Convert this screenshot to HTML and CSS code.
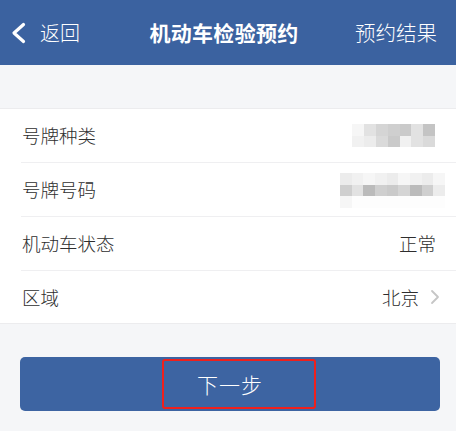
FILE: index.html
```html
<!DOCTYPE html>
<html lang="zh">
<head>
<meta charset="utf-8">
<link rel="stylesheet" href="styles.css">
</head>
<body>
<div class="page">
  <header class="nav">
    <div class="nav-left">
      <svg class="back-icon" width="16" height="22" viewBox="0 0 16 22"><path d="M12.5 2.5 L3 11 L12.5 19.5" fill="none" stroke="#fff" stroke-width="3.2" stroke-linecap="round" stroke-linejoin="round"/></svg>
      <span class="back-text">返回</span>
    </div>
    <div class="nav-title">机动车检验预约</div>
    <div class="nav-right">预约结果</div>
  </header>
  <div class="spacer"></div>
  <section class="list">
    <div class="row">
      <span class="label">号牌种类</span>
      <div class="mosaic m7">
        <i class="s1"></i><i class="s4"></i><i class="s6"></i><i class="s7"></i><i class="s8"></i><i class="s4"></i><i class="s9"></i>
        <i class="s2"></i><i class="s3"></i><i class="s5"></i><i class="s8"></i><i class="s2"></i><i class="s4"></i><i class="s5"></i>
      </div>
    </div>
    <div class="row">
      <span class="label">号牌号码</span>
      <div class="mosaic m9">
        <i class="s3"></i><i class="s2"></i><i class="s1"></i><i class="s2"></i><i class="s3"></i><i class="s1"></i><i class="s2"></i><i class="s3"></i><i class="s1"></i>
        <i class="s7"></i><i class="s4"></i><i class="s10"></i><i class="s7"></i><i class="s8"></i><i class="s6"></i><i class="s10"></i><i class="s7"></i><i class="s3"></i>
        <i class="s1"></i><i class="s0"></i><i class="s0"></i><i class="s0"></i><i class="s0"></i><i class="s0"></i><i class="s0"></i><i class="s0"></i><i class="s0"></i>
      </div>
    </div>
    <div class="row">
      <span class="label">机动车状态</span>
      <span class="value">正常</span>
    </div>
    <div class="row">
      <span class="label">区域</span>
      <span class="value">北京</span>
      <svg class="arrow" width="10" height="16" viewBox="0 0 10 16"><path d="M2 2 L8 8 L2 14" fill="none" stroke="#c6c6c6" stroke-width="1.8" stroke-linecap="round" stroke-linejoin="round"/></svg>
    </div>
  </section>
  <div class="footer">
    <div class="btn">
      <span>下一步</span>
      <div class="highlight"></div>
    </div>
  </div>
</div>
</body>
</html>
```

FILE: styles.css
```css
* { box-sizing: border-box; }
html, body { margin: 0; padding: 0; }
body {
  font-family: "Noto Sans CJK SC", "Noto Sans", sans-serif;
  background: #f5f6f8;
  color: #333;
}
.page { width: 456px; height: 431px; overflow: hidden; background: #f5f6f8; }

.nav {
  height: 65px;
  background: #3b62a0;
  color: #fff;
  display: grid;
  grid-template-columns: 1fr auto 1fr;
  align-items: center;
  padding: 0 19px 0 11px;
}
.nav-left { display: flex; align-items: center; }
.back-icon { margin-top: 1px; }
.back-text { font-size: 20px; margin-left: 13px; line-height: 1; font-weight: 300; }
.nav-title { font-size: 21px; font-weight: 700; line-height: 1; letter-spacing: 0.3px; }
.nav-right { font-size: 20.5px; text-align: right; line-height: 1; font-weight: 300; }

.spacer { height: 43px; }

.list {
  background: #fff;
  border-top: 1px solid #ececee;
  border-bottom: 1px solid #ececee;
  padding-left: 21px;
}
.row {
  height: 54px;
  display: flex;
  align-items: center;
  padding-right: 20px;
  border-bottom: 1px solid #efeff1;
}
.row:last-child { border-bottom: none; height: 52px; }
.label { font-size: 18.5px; flex: 1; line-height: 1; padding-left: 1px; font-weight: 300; color: #2e2e2e; }
.value { font-size: 18.5px; line-height: 1; font-weight: 300; color: #2e2e2e; }
.arrow { margin-left: 11px; margin-right: -4px; }

.mosaic { display: grid; grid-auto-rows: 11.5px; }
.mosaic i { display: block; }
.m7 { grid-template-columns: repeat(7, 11.8px); margin-right: 1px; }
.m9 { grid-template-columns: repeat(9, 11.7px); margin-right: -9px; margin-top: 2px; }
.s0 { background: #fdfdfd; }
.s1 { background: #f6f6f6; }
.s2 { background: #f1f1f1; }
.s3 { background: #ececec; }
.s4 { background: #e2e2e2; }
.s5 { background: #dadada; }
.s6 { background: #d5d5d5; }
.s7 { background: #cfcfcf; }
.s8 { background: #cacaca; }
.s9 { background: #c4c4c4; }
.s10 { background: #bbbbbb; }

.footer { padding: 33px 16px 0 20px; }
.btn {
  position: relative;
  height: 54px;
  background: #3d64a2;
  border-radius: 5px;
  display: flex;
  align-items: center;
  justify-content: center;
  color: #fff;
  font-size: 21px;
  font-weight: 300;
  letter-spacing: 1px;
}
.highlight {
  position: absolute;
  left: 142px;
  top: 2px;
  width: 154px;
  height: 50px;
  border: 2.5px solid #f0201c;
  border-radius: 3px;
}
```
